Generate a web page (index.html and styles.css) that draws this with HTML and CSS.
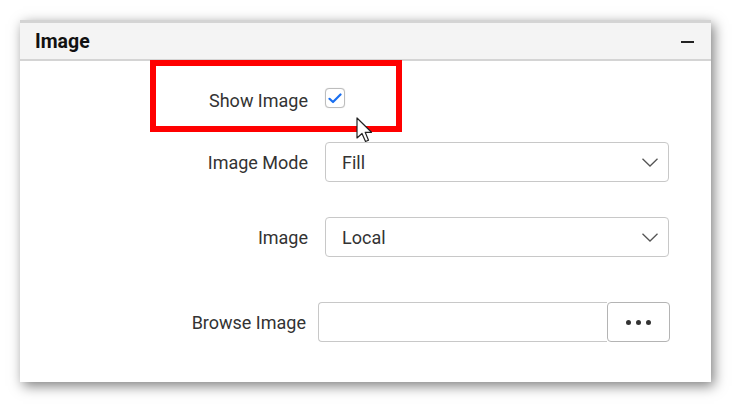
FILE: index.html
```html
<!DOCTYPE html>
<html>
<head>
<meta charset="utf-8">
<link rel="stylesheet" href="styles.css">
</head>
<body>
<div class="panel">
  <div class="header">
    <span class="title">Image</span>
    <span class="collapse"></span>
  </div>
  <div class="content">
    <div class="row row-show">
      <label class="label label-show">Show Image</label>
      <span class="checkbox">
        <svg width="14" height="11" viewBox="0 0 14 11"><path d="M1.5 5.8 L5 9 L12.5 1.5" fill="none" stroke="#1a6ff0" stroke-width="2.2" stroke-linecap="round" stroke-linejoin="round"/></svg>
      </span>
    </div>
    <div class="row row-mode">
      <label class="label">Image Mode</label>
      <div class="dropdown"><span class="value">Fill</span>
        <svg class="chev" width="16" height="9" viewBox="0 0 16 9"><path d="M0.5 0.8 L8 8 L15.5 0.8" fill="none" stroke="#555" stroke-width="1.3"/></svg>
      </div>
    </div>
    <div class="row row-image">
      <label class="label">Image</label>
      <div class="dropdown"><span class="value">Local</span>
        <svg class="chev" width="16" height="9" viewBox="0 0 16 9"><path d="M0.5 0.8 L8 8 L15.5 0.8" fill="none" stroke="#555" stroke-width="1.3"/></svg>
      </div>
    </div>
    <div class="row row-browse">
      <label class="label label-browse">Browse Image</label>
      <div class="browse">
        <div class="file-input"></div>
        <button class="dots-btn"><span class="dot"></span><span class="dot"></span><span class="dot"></span></button>
      </div>
    </div>
    <div class="highlight"></div>
    <svg class="cursor" width="19" height="28" viewBox="0 0 19 28"><path d="M1 1 L1 21 L6 16.5 L9.5 24.5 L12.5 23.2 L9.2 15.3 L15.5 15.3 Z" fill="#fff" stroke="#222" stroke-width="1.2" stroke-linejoin="round"/></svg>
  </div>
</div>
</body>
</html>
```

FILE: styles.css
```css
html, body {
  margin: 0;
  padding: 0;
  background: #fff;
}
body {
  font-family: Roboto, "Liberation Sans", sans-serif;
  width: 732px;
  height: 404px;
  overflow: hidden;
}
.panel {
  margin: 20px 0 0 20px;
  width: 691px;
  height: 362px;
  background: #fff;
  box-shadow: 3px 4px 12px rgba(0, 0, 0, 0.5);
  display: flex;
  flex-direction: column;
}
.header {
  border-top: 3px solid #d4d4d4;
  border-bottom: 2px solid #d4d4d4;
  background: #f4f4f4;
  height: 36px;
  display: flex;
  align-items: center;
  justify-content: space-between;
  padding: 0 17px 0 15px;
}
.title {
  font-weight: bold;
  font-size: 19.5px;
  color: #111;
}
.collapse {
  width: 13px;
  height: 2px;
  background: #222;
  margin-top: 1px;
}
.content {
  position: relative;
  flex: 1;
  display: flex;
  flex-direction: column;
}
.row {
  display: flex;
  align-items: center;
  height: 40px;
}
.row-show { margin-top: 27px; height: 20px; }
.row-mode { margin-top: 34px; }
.row-image { margin-top: 35px; }
.row-browse { margin-top: 45px; }
.label {
  width: 288px;
  text-align: right;
  font-size: 18px;
  color: #333;
  margin-right: 17px;
}
.label-show {
  margin-top: 5px;
}
.label-browse {
  width: 286px;
  margin-right: 12px;
}
.checkbox {
  width: 18px;
  height: 18px;
  border: 1px solid #bdbdbd;
  border-radius: 4px;
  box-shadow: 0 0 1px rgba(0,0,0,0.2);
  display: flex;
  align-items: center;
  justify-content: center;
  background: #fff;
}
.dropdown {
  box-sizing: border-box;
  width: 344px;
  height: 40px;
  border: 1px solid #c8c8c8;
  border-radius: 4px;
  display: flex;
  align-items: center;
  justify-content: space-between;
  padding: 0 10px 0 16px;
  background: #fff;
}
.value {
  font-size: 18px;
  color: #333;
}
.chev { margin-top: 1px; }
.browse {
  display: flex;
  height: 40px;
}
.file-input {
  box-sizing: border-box;
  width: 289px;
  height: 40px;
  border: 1px solid #c8c8c8;
  border-right: none;
  border-radius: 4px 0 0 4px;
}
.dots-btn {
  box-sizing: border-box;
  width: 63px;
  height: 40px;
  border: 1.5px solid #b4b4b4;
  border-radius: 4px;
  background: #fff;
  display: flex;
  align-items: center;
  justify-content: center;
  gap: 5px;
  padding: 0;
}
.dot {
  width: 5px;
  height: 5px;
  border-radius: 50%;
  background: #333;
}
.highlight {
  position: absolute;
  left: 130px;
  top: -1px;
  width: 252px;
  height: 72px;
  box-sizing: border-box;
  border: 6px solid #ff0000;
}
.cursor {
  position: absolute;
  left: 336px;
  top: 56px;
}
```
